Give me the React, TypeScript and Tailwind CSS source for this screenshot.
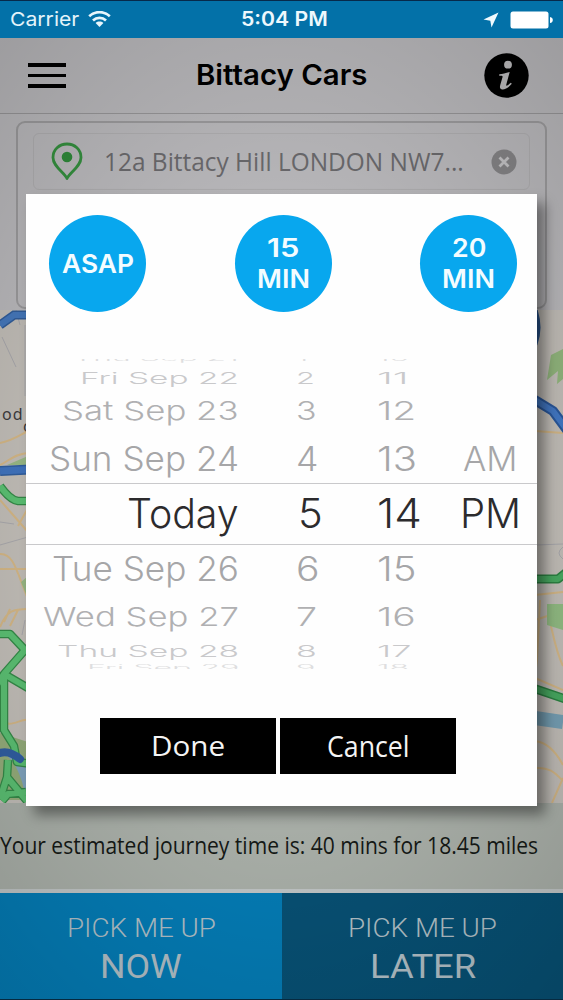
import { useLayoutEffect, useRef, useState } from "react";

type FitProps = { text: string; width: number; scaleY?: number; className?: string };

/** One line of text stretched or condensed to a given width. */
function Fit({ text, width, scaleY = 1, className = "" }: FitProps) {
  const ref = useRef<HTMLSpanElement>(null);
  const [scaleX, setScaleX] = useState(1);
  useLayoutEffect(() => {
    if (ref.current) setScaleX(width / ref.current.offsetWidth);
  }, [text, width]);
  return (
    <span className="flex shrink-0" style={{ width }}>
      <span
        ref={ref}
        className={`block shrink-0 origin-left whitespace-nowrap leading-none ${className}`}
        style={{ transform: `scale(${scaleX}, ${scaleY})` }}
      >
        {text}
      </span>
    </span>
  );
}

function StatusBar() {
  return (
    <div className="flex h-[38px] shrink-0 items-center justify-between border-t border-[#06294a] bg-[#0371a8] pl-[10px] pr-[10px] text-white">
      <div className="flex w-[231px] items-center gap-[9px]">
        <Fit text="Carrier" width={69} className="font-[Inter,sans-serif] text-[19px] text-[#e4f3fa]" />
        <svg width="23" height="17" viewBox="0 0 23 17" fill="none" stroke="#e9f6fc" strokeWidth="2.7">
          <path d="M1.2 5.200C7 -0.200 16 -0.200 21.8 5.200" />
          <path d="M5 9.400C8.600 6 14.400 6 18 9.400" />
          <path d="M11.500 16L7.600 12C9.800 10.100 13.200 10.100 15.400 12Z" fill="#e9f6fc" stroke="none" />
        </svg>
      </div>
      <Fit text="5:04 PM" width={87} className="font-[Inter,sans-serif] text-[19.500px] font-semibold text-[#edf8fd]" />
      <div className="flex flex-1 items-center justify-end gap-[11px]">
        <svg width="16" height="16" viewBox="0 0 16 16" fill="#f1fafe">
          <path d="M15.500 0.500L0.500 7.500L7.300 8.700L8.500 15.500Z" />
        </svg>
        <svg width="43" height="18" viewBox="0 0 43 18" fill="#fff">
          <rect x="0.500" y="0.500" width="38" height="17" rx="2.500" />
          <path d="M40 6Q42.800 6.500 42.800 9T40 12Z" />
        </svg>
      </div>
    </div>
  );
}

function Header() {
  return (
    <header className="flex h-[76px] shrink-0 items-center border-b border-[#989799] pl-7 pr-[34px]">
      <div className="flex w-[168px] flex-col gap-[7px]">
        <span className="h-[3.500px] w-[38px] bg-black" />
        <span className="h-[3.500px] w-[38px] bg-black" />
        <span className="h-[3.500px] w-[38px] bg-black" />
      </div>
      <Fit text="Bittacy Cars" width={172} scaleY={1.04} className="font-[Inter,sans-serif] text-[27.500px] font-semibold text-black" />
      <svg className="ml-auto" width="45" height="45" viewBox="0 0 45 45">
        <circle cx="22.500" cy="22.500" r="22.200" fill="#000" />
        <circle cx="24" cy="11.700" r="3.900" fill="#bdbcbe" />
        <path
          d="M15.300 21.200C18.500 21.200 21.500 20 25.700 19L22.300 31.500C21.800 33.300 22.800 33.200 26.800 29.800L27.800 30.800C24 35.200 20.500 36.800 18 36.400C15.600 36 15.700 34 16.300 31.800L18.500 24.200C18.900 22.600 18 22.500 15.200 22.800Z"
          fill="#bdbcbe"
        />
      </svg>
    </header>
  );
}

function AddressCard() {
  return (
    <div className="mx-4 mt-[7px] h-[188px] rounded-[9px] border-2 border-[#9c9b9d] bg-[#bbbabd] px-[15px] pt-[10px]">
      <div className="flex h-[57px] items-center rounded-md border border-[#b0afb1] pl-[17px] pr-3">
        <svg width="32" height="39" viewBox="0 0 32 39" fill="none">
          <path
            d="M16 36.500C13 30 2 24.500 2 15.500C2 7.500 8.300 2 16 2S30 7.500 30 15.500C30 24.500 19 30 16 36.500Z"
            stroke="#35903f"
            strokeWidth="2.800"
            strokeLinejoin="round"
          />
          <circle cx="16" cy="15" r="5.300" fill="#2f8a3a" />
        </svg>
        <div className="ml-[21px]">
          <Fit
            text="12a Bittacy Hill LONDON NW7..."
            width={360}
            scaleY={1.06}
            className="font-['Open_Sans',sans-serif] text-[24.500px] text-[#6b6a6d]"
          />
        </div>
        <svg className="ml-auto" width="26" height="26" viewBox="0 0 26 26">
          <circle cx="13" cy="13" r="12.500" fill="#858486" />
          <path d="M8.500 8.500L17.500 17.500M17.500 8.500L8.500 17.500" stroke="#c4c3c5" strokeWidth="2.800" />
        </svg>
      </div>
    </div>
  );
}

function RoadMap() {
  return (
    <svg className="block shrink-0" width="563" height="493" viewBox="0 310 563 493" fill="none">
      <rect y="310" width="563" height="493" fill="#c3bfb9" />
      <g stroke="#d5b887" strokeWidth="2">
        <path d="M0 443C12 441 20 435 28 431M0 465C9 461 14 454 28 453" />
        <path d="M0 500L14 516L28 532M18 526L28 508M0 554C14 553 17 573 28 599M0 569H28" />
        <path d="M0 627C7 610 14 609 28 609M10 609L4 622M18 610L10 626M0 719C10 730 20 718 28 720" />
        <path d="M535 431L563 433M535 595L563 592M535 620L563 611M548 614C553 632 555 650 563 666" />
        <path d="M535 678L563 690M535 741C545 742 555 750 563 765M535 768C550 767 555 773 563 781M563 778L552 803" />
        <path d="M540 600L537 660L535 675" />
      </g>
      <g stroke="#aaa9ad" strokeWidth="1">
        <path d="M2 337L16 367M16 310L20 325M25 325V396M0 522L14 524M0 545L28 537M22 635L25 620M535 545L563 544M563 547Q555 553 563 559" />
      </g>
      <path d="M7 465L28 456V465ZM21 582L28 576V599Z" fill="#9aba86" />
      <path d="M563 349L551 355L547 380L558 371L557 384L563 379Z" fill="#93b77e" />
      <path d="M547 604H563V630L547 625Z" fill="#93bd84" />
      <path d="M0 733L28 742V800H0Z" fill="#96ae7c" />
      <path d="M12 753Q23 762 30 790" stroke="#83a7c2" strokeWidth="11" />
      <path d="M535 718L563 722" stroke="#77a1b6" strokeWidth="14" />
      <path d="M0 325L14 315H40" stroke="#325e9b" strokeWidth="9" />
      <path d="M0 325L14 315H40" stroke="#4679bd" strokeWidth="6" />
      <path d="M0 471L40 469" stroke="#315f9f" strokeWidth="10" />
      <path d="M0 471L40 469" stroke="#4074bf" strokeWidth="7" />
      <g strokeLinejoin="round">
        <path d="M0 486Q10 500 18 501H40M0 634H10L25 650L4 674L-3 685M4 674L28 688M4 675V730L14 746L17 762L32 764M8 760L7 777L0 799M7 777L27 801M2 801L8 794L26 792" stroke="#358c49" strokeWidth="8.500" />
        <path d="M0 486Q10 500 18 501H40M0 634H10L25 650L4 674L-3 685M4 674L28 688M4 675V730L14 746L17 762L32 764M8 760L7 777L0 799M7 777L27 801M2 801L8 794L26 792" stroke="#5cc274" strokeWidth="6" />
        <path d="M530 579H558L568 571M530 687L568 700" stroke="#2c8343" strokeWidth="9" />
        <path d="M530 579H558L568 571M530 687L568 700" stroke="#48ab62" strokeWidth="6" />
        <path d="M0 753Q9 750 20 759" stroke="#315fa3" strokeWidth="8" strokeLinecap="round" />
        <path d="M530 397L553 411L570 434" stroke="#2a589c" strokeWidth="10" />
        <path d="M530 397L553 411L570 434" stroke="#4379c6" strokeWidth="6" />
        <path d="M534 310Q540 328 534 344" stroke="#29548e" strokeWidth="7" />
      </g>
      <text x="2" y="420" fontFamily="'Noto Sans', sans-serif" fontSize="16" fill="#3d3c3e" letterSpacing="1">
        od
      </text>
      <text x="23" y="432" fontFamily="'Noto Sans', sans-serif" fontSize="16" fill="#3d3c3e">
        c
      </text>
    </svg>
  );
}

type Row = {
  date: string;
  dateW: number;
  hour: string;
  minute: string;
  box: string;
  font: string;
  scaleY: number;
  hourW: number;
  minuteW: number;
  period?: string;
  periodW?: number;
};

const rows: Row[] = [
  { date: "Thu Sep 21", dateW: 166, hour: "1", minute: "10", box: "h-[9.300px] items-start", font: "text-[34px] text-[#dedee0] -mt-[18px]", scaleY: 0.25, hourW: 12, minuteW: 32 },
  { date: "Fri Sep 22", dateW: 159, hour: "2", minute: "11", box: "h-[19.800px] items-center", font: "text-[34px] text-[#c9c9cb]", scaleY: 0.47, hourW: 19, minuteW: 32 },
  { date: "Sat Sep 23", dateW: 177, hour: "3", minute: "12", box: "h-[46.400px] items-center", font: "text-[34px] text-[#b0b0b2]", scaleY: 0.77, hourW: 21, minuteW: 39 },
  { date: "Sun Sep 24", dateW: 190, hour: "4", minute: "13", box: "h-[49px] items-center", font: "text-[34px] text-[#a6a6a8]", scaleY: 0.98, hourW: 22, minuteW: 40, period: "AM", periodW: 55 },
  { date: "Today", dateW: 112, hour: "5", minute: "14", box: "h-[61.500px] items-center border-y border-[#c9c9cb]", font: "text-[40px] text-[#2c2b2d]", scaleY: 1.01, hourW: 25, minuteW: 45, period: "PM", periodW: 61 },
  { date: "Tue Sep 26", dateW: 187, hour: "6", minute: "15", box: "h-[48.400px] items-center", font: "text-[34px] text-[#a6a6a8]", scaleY: 0.98, hourW: 23, minuteW: 40 },
  { date: "Wed Sep 27", dateW: 196, hour: "7", minute: "16", box: "h-[46.600px] items-center", font: "text-[34px] text-[#b0b0b2]", scaleY: 0.77, hourW: 21, minuteW: 39 },
  { date: "Thu Sep 28", dateW: 182, hour: "8", minute: "17", box: "h-[21.400px] items-center", font: "text-[34px] text-[#c9c9cb]", scaleY: 0.47, hourW: 21, minuteW: 34 },
  { date: "Fri Sep 29", dateW: 152, hour: "9", minute: "18", box: "h-[7.600px] items-start", font: "text-[34px] text-[#dedee0] -mt-[10.500px]", scaleY: 0.25, hourW: 19, minuteW: 32 },
];

function Picker() {
  return (
    <div className="mt-[47px] flex flex-col font-[Inter,sans-serif] font-light">
      {rows.map((r) => (
        <div key={r.date} className={`flex shrink-0 overflow-hidden ${r.box}`}>
          <div className="flex w-[213px] shrink-0 justify-end">
            <Fit text={r.date} width={r.dateW} scaleY={r.scaleY} className={r.font} />
          </div>
          <div className={r.date === "Today" ? "ml-[59px] flex w-[79px] shrink-0" : "ml-[57px] flex w-[81px] shrink-0"}>
            <Fit text={r.hour} width={r.hourW} scaleY={r.scaleY} className={r.font} />
          </div>
          <div className="flex w-[82px] shrink-0">
            <Fit text={r.minute} width={r.minuteW} scaleY={r.scaleY} className={r.font} />
          </div>
          {r.period && (
            <div className={r.period === "AM" ? "ml-[4px]" : "ml-px"}>
              <Fit text={r.period} width={r.periodW ?? 50} scaleY={r.scaleY} className={r.font} />
            </div>
          )}
        </div>
      ))}
    </div>
  );
}

function Quick({ lines }: { lines: { text: string; width: number }[] }) {
  return (
    <button className="flex size-[97px] flex-col items-center justify-center gap-[5px] rounded-full bg-[#08a7ee] font-[Inter,sans-serif] text-[26px] font-semibold text-[#f3fcff]">
      {lines.map((l) => (
        <Fit key={l.text} text={l.text} width={l.width} />
      ))}
    </button>
  );
}

function Modal() {
  return (
    <div className="absolute left-[26px] top-[194px] flex h-[612px] w-[511px] flex-col bg-[#fefefe] shadow-[8px_9px_12px_rgba(0,0,0,0.4)]">
      <div className="flex justify-between pl-[23px] pr-[20px] pt-[21px]">
        <Quick lines={[{ text: "ASAP", width: 72 }]} />
        <Quick lines={[{ text: "15", width: 32 }, { text: "MIN", width: 53 }]} />
        <Quick lines={[{ text: "20", width: 34 }, { text: "MIN", width: 53 }]} />
      </div>
      <Picker />
      <div className="mt-[49.500px] flex gap-1 pl-[74px] font-['Open_Sans',sans-serif] text-[28px] text-[#f4f4f4]">
        <button className="flex h-14 w-44 items-center justify-center bg-black pb-[2px]">
          <Fit text="Done" width={74} />
        </button>
        <button className="flex h-14 w-44 items-center justify-center bg-black pb-[2px]">
          <Fit text="Cancel" width={83} scaleY={1.07} />
        </button>
      </div>
    </div>
  );
}

export default function App() {
  return (
    <div className="relative flex h-[1000px] w-[563px] flex-col overflow-hidden bg-[#bab9bc]">
      <StatusBar />
      <div className="relative flex h-[961px] flex-col">
        <Header />
        <div className="flex h-[196px] shrink-0 flex-col bg-[#bbbabd]">
          <AddressCard />
        </div>
        <RoadMap />
        <div className="flex h-[86px] shrink-0 items-center bg-[#abb1aa] pb-[2px]">
          <Fit
            text="Your estimated journey time is: 40 mins for 18.45 miles"
            width={538}
            scaleY={1.04}
            className="font-['Open_Sans',sans-serif] text-[22px] text-[#151916]"
          />
        </div>
        <div className="h-[3.500px] shrink-0 bg-[#c2c7c7]" />
        <div className="flex h-[106.500px] shrink-0 font-[Roboto,sans-serif] text-[#b3c1c8]">
          <button className="flex h-full w-[282px] flex-col items-center bg-[#047db7] pt-[23px]">
            <Fit text="PICK ME UP" width={149} className="text-[25px] font-light" />
            <span className="h-[8px]" />
            <Fit text="NOW" width={82} className="text-[34px]" />
          </button>
          <button className="flex h-full w-[281px] flex-col items-center bg-[#075175] pt-[23px]">
            <Fit text="PICK ME UP" width={149} className="text-[25px] font-light" />
            <span className="h-[8px]" />
            <Fit text="LATER" width={106} className="text-[34px]" />
          </button>
        </div>
        <div className="pointer-events-none absolute inset-0 bg-[radial-gradient(ellipse_75%_65%_at_50%_50%,rgba(0,0,0,0)_40%,rgba(0,0,0,0.15)_100%)]" />
      </div>
      <div className="h-px bg-[#062a40]" />
      <Modal />
    </div>
  );
}
